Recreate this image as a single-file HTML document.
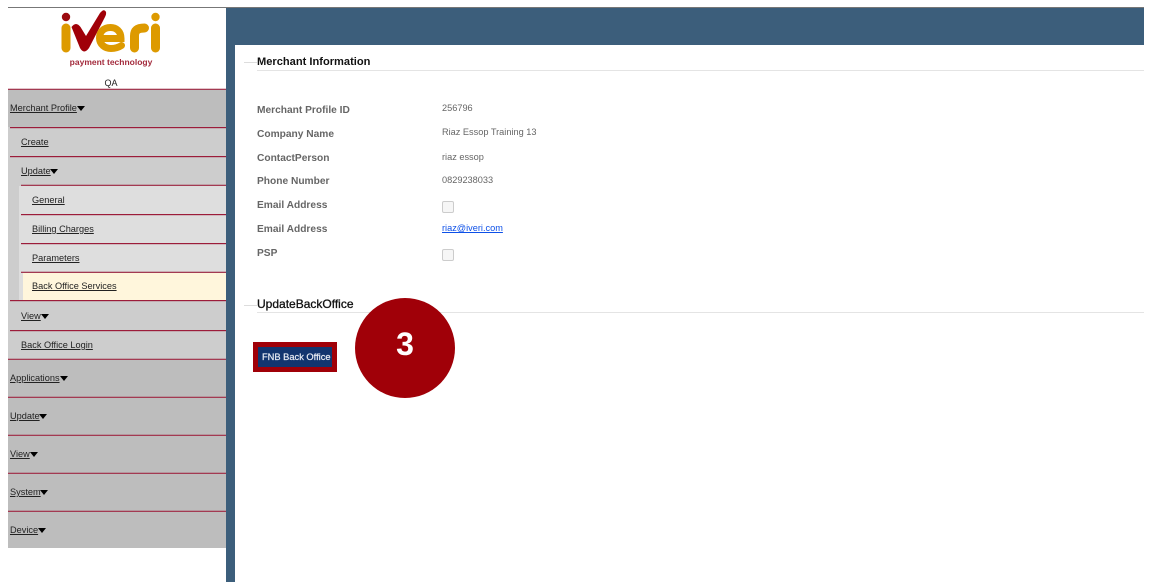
<!DOCTYPE html>
<html>
<head>
<meta charset="utf-8">
<style>
html,body{margin:0;padding:0;background:#fff;width:1155px;height:582px;overflow:hidden;font-family:"Liberation Sans",sans-serif}
#w{left:0;top:0;width:1155px;height:582px;filter:blur(0.3px)}
div,a,span,svg{position:absolute}
.bar{left:8px;top:7px;width:1136px;height:1px;background:#777}
.blue{left:226px;top:8px;width:918px;height:37px;background:#3c5e7b}
.blue2{left:226px;top:45px;width:9px;height:537px;background:#3c5e7b}
.row{background:#cdcdcd;left:8px;width:218px}
.m{background:#bdbdbd}
.ln{height:1px;background:#9c1c3a;box-shadow:0 1px 0 rgba(156,28,58,.2)}
.p{background:#a33a52;box-shadow:0 -1px 0 rgba(163,58,82,.3)}
.t{font-size:9.2px;color:#222;text-decoration:underline;white-space:nowrap;line-height:11px}
.tri{width:0;height:0;border-left:4.5px solid transparent;border-right:4.5px solid transparent;border-top:5px solid #000}
.lb{left:257px;font-size:10.2px;font-weight:bold;color:#666;white-space:nowrap;line-height:12px}
.v{left:442px;font-size:9.2px;color:#666;white-space:nowrap;line-height:11px}
.cb{left:442px;width:10px;height:10px;border:1px solid #ccc;border-radius:2px;background:#f6f6f6}
.h{left:257px;font-size:11.1px;font-weight:bold;color:#111;white-space:nowrap;line-height:14px}
</style>
</head>
<body>
<div id="w">
<div class="bar"></div>
<div class="blue"></div>
<div class="blue2"></div>

<svg style="left:55px;top:8px" width="112" height="48" viewBox="55 8 112 48">
  <circle cx="66" cy="17" r="4.200" fill="#9c0b10"/>
  <path d="M66 28V48" stroke="#dd9a00" stroke-width="9" stroke-linecap="round" fill="none"/>
  <path d="M71.500 27Q76 21 80.500 27L86 36L100 13Q104 8 106 12Q106.500 14 105 17L89 48Q84 55 80 48Z" fill="#a00008"/>
  <path d="M99.500 38.500H121C121 31 116 27.500 110.500 27.500C103.500 27.500 99.500 32 99.500 38C99.500 44.500 105 48.500 111 48.500C115 48.500 118.500 47.500 121.500 45.500" stroke="#dd9a00" stroke-width="7" stroke-linecap="round" fill="none"/>
  <path d="M134.500 48V36C134.500 30 138 28 144.500 28" stroke="#dd9a00" stroke-width="9" stroke-linecap="round" fill="none"/>
  <circle cx="155.500" cy="17" r="4.200" fill="#dd9a00"/>
  <path d="M155.500 28V48" stroke="#dd9a00" stroke-width="9" stroke-linecap="round" fill="none"/>
</svg>
<div style="left:8px;width:206px;top:57px;text-align:center;font-size:8.5px;font-weight:bold;color:#a32a3c;line-height:11px">payment technology</div>
<div style="left:8px;width:206px;top:78px;text-align:center;font-size:9px;color:#222;line-height:11px">QA</div>

<!-- sidebar backgrounds -->
<div class="row m" style="top:89px;height:38px"></div>
<div class="row" style="top:127px;height:232px"></div>
<div style="left:19px;top:186px;width:207px;height:115px;background:#dedede"></div>
<div style="left:23px;top:273px;width:203px;height:27px;background:#fff6dc"></div>
<div class="row m" style="top:359px;height:189px"></div>

<!-- lines -->
<div class="ln p" style="left:8px;width:218px;top:89px"></div>
<div class="ln" style="left:10px;width:216px;top:127px"></div>
<div class="ln" style="left:10px;width:216px;top:156px"></div>
<div class="ln p" style="left:21px;width:205px;top:185px"></div>
<div class="ln" style="left:21px;width:205px;top:214px"></div>
<div class="ln" style="left:21px;width:205px;top:243px"></div>
<div class="ln p" style="left:21px;width:205px;top:272px"></div>
<div class="ln" style="left:10px;width:216px;top:300px"></div>
<div class="ln" style="left:10px;width:216px;top:330px"></div>
<div class="ln p" style="left:8px;width:218px;top:359px"></div>
<div class="ln p" style="left:8px;width:218px;top:397px"></div>
<div class="ln p" style="left:8px;width:218px;top:435px"></div>
<div class="ln p" style="left:8px;width:218px;top:473px"></div>
<div class="ln p" style="left:8px;width:218px;top:511px"></div>

<!-- sidebar text -->
<a class="t" style="left:10px;top:103px">Merchant Profile</a><div class="tri" style="left:77px;top:106px"></div>
<a class="t" style="left:21px;top:137px">Create</a>
<a class="t" style="left:21px;top:166px">Update</a><div class="tri" style="left:50px;top:169px"></div>
<a class="t" style="left:32px;top:195px">General</a>
<a class="t" style="left:32px;top:224px">Billing Charges</a>
<a class="t" style="left:32px;top:253px">Parameters</a>
<a class="t" style="left:32px;top:281px">Back Office Services</a>
<a class="t" style="left:21px;top:311px">View</a><div class="tri" style="left:41px;top:314px"></div>
<a class="t" style="left:21px;top:340px">Back Office Login</a>
<a class="t" style="left:10px;top:373px">Applications</a><div class="tri" style="left:60px;top:376px"></div>
<a class="t" style="left:10px;top:411px">Update</a><div class="tri" style="left:39px;top:414px"></div>
<a class="t" style="left:10px;top:449px">View</a><div class="tri" style="left:30px;top:452px"></div>
<a class="t" style="left:10px;top:487px">System</a><div class="tri" style="left:40px;top:490px"></div>
<a class="t" style="left:10px;top:525px">Device</a><div class="tri" style="left:38px;top:528px"></div>

<!-- content -->
<div style="left:244px;top:62px;width:13px;height:1px;background:#ddd"></div>
<div style="left:257px;top:70px;width:887px;height:1px;background:#e4e4e4"></div>
<div class="h" style="top:55px">Merchant Information</div>

<div class="lb" style="top:105px">Merchant Profile ID</div>
<div class="v" style="top:103px">256796</div>
<div class="lb" style="top:129px">Company Name</div>
<div class="v" style="top:127px">Riaz Essop Training 13</div>
<div class="lb" style="top:153px">ContactPerson</div>
<div class="v" style="top:152px">riaz essop</div>
<div class="lb" style="top:176px">Phone Number</div>
<div class="v" style="top:175px">0829238033</div>
<div class="lb" style="top:200px">Email Address</div>
<div class="cb" style="top:201px"></div>
<div class="lb" style="top:224px">Email Address</div>
<a class="v" style="top:223px;color:#0d50e8;text-decoration:underline">riaz@iveri.com</a>
<div class="lb" style="top:248px">PSP</div>
<div class="cb" style="top:249px"></div>

<div style="left:244px;top:305px;width:13px;height:1px;background:#ddd"></div>
<div style="left:257px;top:312px;width:887px;height:1px;background:#e4e4e4"></div>
<div class="h" style="top:297px;font-size:12px;font-weight:normal;-webkit-text-stroke:0.3px #111">UpdateBackOffice</div>

<div style="left:253px;top:342px;width:84px;height:30px;background:#a00008"></div>
<div style="left:258px;top:347px;width:74px;height:20px;background:#12356f"></div>
<div style="left:262px;top:347px;color:#e8ecf4;font-size:9.3px;-webkit-text-stroke:0.2px #e8ecf4;line-height:20px;white-space:nowrap">FNB Back Office</div>

<div style="left:355px;top:298px;width:100px;height:100px;border-radius:50%;background:#a00008;color:#fff;font-size:32px;font-weight:bold;line-height:92px;text-align:center">3</div>
</div>
</body>
</html>
